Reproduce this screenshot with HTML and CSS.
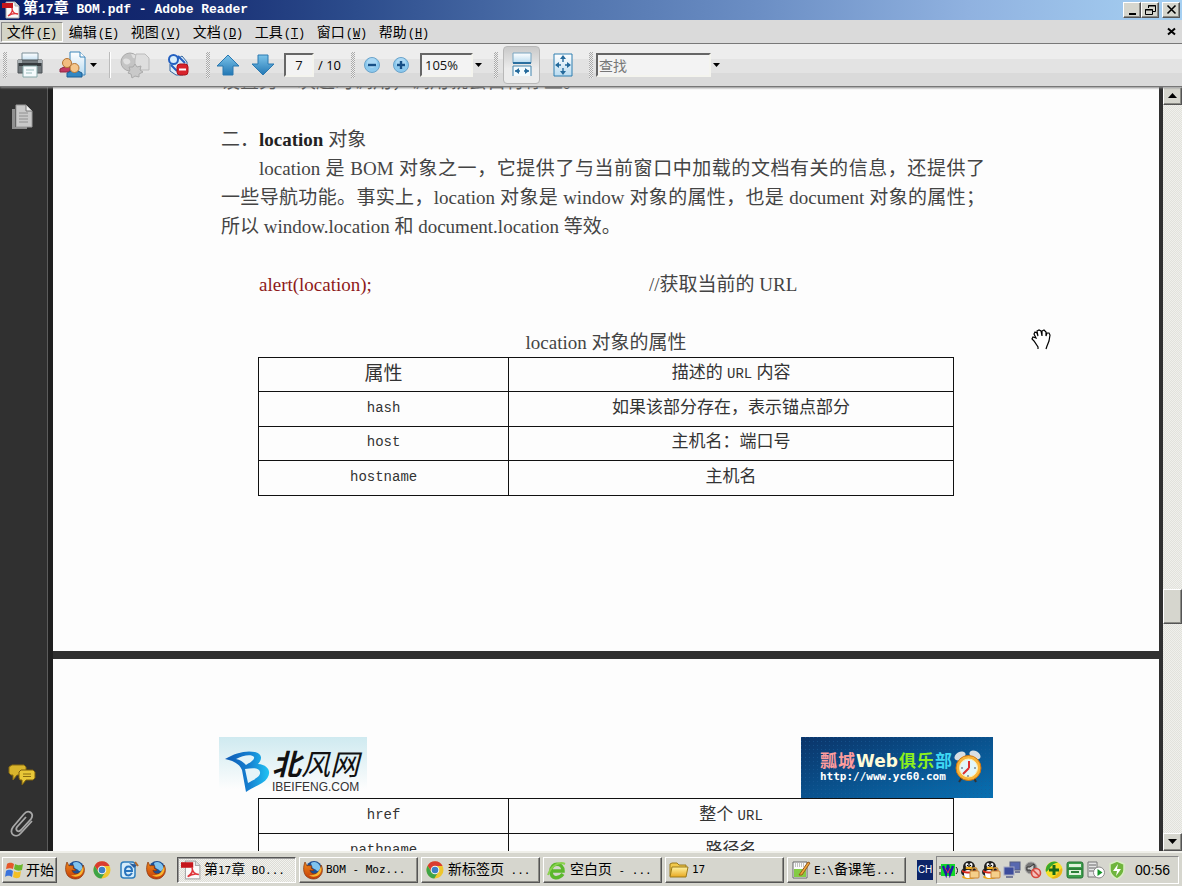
FILE: index.html
```html
<!DOCTYPE html>
<html lang="zh-CN">
<head>
<meta charset="utf-8">
<title>第17章 BOM.pdf - Adobe Reader</title>
<link rel="stylesheet" href="styles.css">
</head>
<body>
<svg class="defs" aria-hidden="true">
  <defs>
    <linearGradient id="blue" x1="0" y1="0" x2="0" y2="1"><stop offset="0" stop-color="#7cc4ea"/><stop offset="1" stop-color="#2277b4"/></linearGradient>
    <linearGradient id="paleblue" x1="0" y1="0" x2="0" y2="1"><stop offset="0" stop-color="#fff"/><stop offset="1" stop-color="#b9dbf0"/></linearGradient>
    <linearGradient id="gold" x1="0" y1="0" x2="0" y2="1"><stop offset="0" stop-color="#fff3a0"/><stop offset="1" stop-color="#e8a820"/></linearGradient>
    <linearGradient id="brandblue" x1="0" y1="0" x2="1" y2="0"><stop offset="0" stop-color="#0f5bb5"/><stop offset="0.55" stop-color="#157fd0"/><stop offset="1" stop-color="#22c4f4"/></linearGradient>
    <linearGradient id="firefox-fur" x1="0" y1="0" x2="0" y2="1"><stop offset="0" stop-color="#f08a1c"/><stop offset="1" stop-color="#c23c08"/></linearGradient>
    <symbol id="pdf" viewBox="0 0 18 18">
      <path d="M4 1h9l4 4v12H4z" fill="#fafafa" stroke="#aaa"/><path d="M13 1v4h4" fill="#ddd" stroke="#aaa"/>
      <path d="M0 2h11v5H0z" fill="#c5161c"/>
      <path d="M6 15c3-2 5-5 4-8 0 4 3 6 6 6-3-1-7 0-10 2z" fill="none" stroke="#e0343a" stroke-width="1.4"/>
    </symbol>
    <symbol id="firefox" viewBox="0 0 20 20">
      <circle cx="11" cy="9" r="8" fill="#1d4f93"/><path d="M8 3c3-2 7-1 9 3 1 3-1 5-3 5-1-2-4-2-5-4z" fill="#7fc3ee"/>
      <path d="M2 2C0 7 0 12 3 16c4 4 11 4 14 0 3-3 3-8 1-11 0 4-1 7-4 8-3 2-7 0-7-3 1 1 3 1 4 0L8 8l1-2C7 6 5 5 4 6z" fill="url(#firefox-fur)" stroke="#82300a" stroke-width=".7"/>
      <path d="M18 6c1 4 0 8-4 10-3 1-6 1-8-1 6 1 10-2 12-9z" fill="#f8b733"/>
    </symbol>
    <symbol id="chrome" viewBox="0 0 20 20">
      <circle cx="10" cy="10" r="8.500" fill="#eec62e"/><path d="M2.600 5.700a8.500 8.500 0 0 1 15 .3H10a4 4 0 0 0-3.700 5.500z" fill="#d93c2f"/>
      <path d="M2.600 5.700a8.500 8.500 0 0 0 6.700 12.800l3.800-6.200a4 4 0 0 1-6.700-.4z" fill="#3fa447"/>
      <circle cx="10" cy="10" r="4.300" fill="#f5f5f5"/><circle cx="10" cy="10" r="3.300" fill="#3c80c6"/>
    </symbol>
    <symbol id="qq" viewBox="0 0 20 20">
      <ellipse cx="9" cy="17" rx="7" ry="2" fill="#e8a318"/><ellipse cx="9" cy="12" rx="8" ry="5" fill="#222"/><ellipse cx="9" cy="7" rx="6" ry="6" fill="#1c1c1c"/>
      <ellipse cx="8" cy="14" rx="4" ry="4" fill="#fff"/><ellipse cx="7" cy="5" rx="1.500" ry="2" fill="#fff"/><ellipse cx="11" cy="5" rx="1.500" ry="2" fill="#fff"/>
      <circle cx="7.500" cy="5.400" r=".7"/><circle cx="10.500" cy="5.400" r=".7"/><ellipse cx="9" cy="8" rx="3.500" ry="1.200" fill="#f2b01c"/>
      <path d="M2 10c4 2 10 2 14 0v2c-4 2-10 2-14 0z" fill="#d8291c"/>
      <path d="M12 11v-1c0-3 5-3 5 0v1" fill="none" stroke="#c98f3e" stroke-width="1.300"/><rect x="10" y="11" width="9" height="7" rx="1" fill="#f5cf8a" stroke="#c8843a"/>
    </symbol>
    <symbol id="caret" viewBox="0 0 7 5"><path d="M0 0h7L3.500 4z"/></symbol>
  </defs>
</svg>

<div class="app">
  <header class="titlebar">
    <svg class="i18"><use href="#pdf"/></svg>
    <h1 class="title"><span class="han">第</span>17<span class="han">章</span> BOM.pdf - Adobe Reader</h1>
    <div class="winbtns">
      <button class="raised winbtn" aria-label="最小化"><svg width="13" height="12"><path d="M3 9h7v2H3z"/></svg></button>
      <button class="raised winbtn" aria-label="还原"><svg width="13" height="12" fill="none" stroke="#000"><path d="M4.500 4V1.500h7v6H9M4 2h8M1.500 5.500h7v5h-7zM1 6h8"/></svg></button>
      <button class="raised winbtn close" aria-label="关闭"><svg width="13" height="12"><path d="M2.500 1.500l8 8m0-8l-8 8" stroke="#000" stroke-width="1.600"/></svg></button>
    </div>
  </header>

  <nav class="menubar">
    <button class="menu open">文件<span class="key">(<u>F</u>)</span></button>
    <button class="menu">编辑<span class="key">(<u>E</u>)</span></button>
    <button class="menu">视图<span class="key">(<u>V</u>)</span></button>
    <button class="menu">文档<span class="key">(<u>D</u>)</span></button>
    <button class="menu">工具<span class="key">(<u>T</u>)</span></button>
    <button class="menu">窗口<span class="key">(<u>W</u>)</span></button>
    <button class="menu">帮助<span class="key">(<u>H</u>)</span></button>
    <button class="docclose" aria-label="关闭文档"><svg width="9" height="9"><path d="M1 1.500l7 6m0-6l-7 6" stroke="#000" stroke-width="2"/></svg></button>
  </nav>

  <div class="toolbar">
    <span class="grip"></span>
    <button class="tool w40" aria-label="打印"><svg width="28" height="28">
      <path d="M6 2h16v9H6z" fill="url(#paleblue)" stroke="#7a8f98"/><path d="M2 9h24v13H2z" fill="#71787c" stroke="#4c5357"/><path d="M3 12h22v3H3z" fill="#363b3e"/><path d="M2 9h4v3H2zM22 9h4v3h-4z" fill="#a9b0b4"/>
      <path d="M7 15h14v11H7z" fill="#f5fafc" stroke="#8aa"/><path d="M10 19h8M10 22h6" stroke="#9bb"/></svg></button>
    <button class="tool share" aria-label="协作"><svg width="28" height="28">
      <path d="M11 1h10l5 5v18H11z" fill="url(#paleblue)" stroke="#3a85ba"/><path d="M21 1v5h5" fill="#fff" stroke="#3a85ba"/>
      <path d="M1 21v-3l4-2h6v5z" fill="#c23a62" stroke="#8e2442"/><circle cx="8" cy="12" r="4.500" fill="#f2bd80" stroke="#b57534"/>
      <path d="M8 26v-4l4-2h7l4 2v4z" fill="#3287c3" stroke="#1c5c92"/><circle cx="15.500" cy="17" r="4.500" fill="#f5c78c" stroke="#b57534"/></svg><svg class="caret"><use href="#caret"/></svg></button>
    <span class="sep"></span>
    <button class="tool w44" aria-label="在线服务" disabled><svg width="32" height="28">
      <circle cx="11" cy="11" r="9" fill="#c4c4c4" stroke="#aaa"/><path d="M4 9c4-4 9 1 7 3s-6 3-7-3zM12 3c4 0 7 3 7 5l-5-1z" fill="#e0e0e0"/><path d="M17 3h9l4 4v12H16V9z" fill="#dedede" stroke="#bbb"/>
      <path d="M16 13l2 3 4-1-1 4 3 2-4 2v3l-4-1-3 2-1-4-3-1 2-3-1-3 4 0z" fill="#c9c9c9" stroke="#aaa"/></svg></button>
    <button class="tool w42" aria-label="审阅状态"><svg width="22" height="24">
      <path d="M3 11v7l6 4h7l4-6V9l-5-6z" fill="#dcecf7" stroke="#33649f"/><circle cx="6.500" cy="6.500" r="4.500" fill="#d8eefc" stroke="#2460c0" stroke-width="2"/><path d="M11 3l7 7M4 12l6 6" stroke="#2460c0" stroke-width="2"/>
      <rect x="10" y="11" width="11" height="11" rx="3" fill="#d8232c" stroke="#a8141c"/><path d="M12 16.500h7" stroke="#fff" stroke-width="2"/></svg></button>
    <span class="grip after"></span>
    <button class="tool w30" aria-label="上一页"><svg width="24" height="24"><path d="M12 2L1 13h6v9h10v-9h6z" fill="url(#blue)" stroke="#2b78b0"/></svg></button>
    <button class="tool w40" aria-label="下一页"><svg width="24" height="24"><path d="M12 22L1 11h6V2h10v9h6z" fill="url(#blue)" stroke="#2b78b0"/></svg></button>
    <input class="field pageno" type="text" value="7" aria-label="页码">
    <span class="total">/ 10</span>
    <span class="grip"></span>
    <button class="tool w28" aria-label="缩小"><svg width="18" height="18"><circle cx="9" cy="9" r="7.500" fill="#8cc9ee" stroke="#6ba3ca"/><circle cx="9" cy="7" r="5" fill="#bfe3f8" opacity=".6"/><path d="M5 9h8" stroke="#164f86" stroke-width="2.400"/></svg></button>
    <button class="tool w30" aria-label="放大"><svg width="18" height="18"><circle cx="9" cy="9" r="7.500" fill="#8cc9ee" stroke="#6ba3ca"/><circle cx="9" cy="7" r="5" fill="#bfe3f8" opacity=".6"/><path d="M5 9h8M9 5v8" stroke="#164f86" stroke-width="2.400"/></svg></button>
    <select class="field zoom" aria-label="缩放"><option>105%</option></select>
    <svg class="caret"><use href="#caret"/></svg>
    <span class="grip far"></span>
    <button class="tool pressed" aria-label="适合宽度"><svg width="20" height="26">
      <path d="M1 1h18v10H1z" fill="url(#paleblue)" stroke="#79a6c2"/><path d="M1 11h18" stroke="#2b6f9f" stroke-width="2"/><path d="M1 24V14h18v10" fill="#f3fafd" stroke="#4384ad"/><path d="M3 19h5m4 0h5" stroke="#246a9c" stroke-width="1.600"/><path d="M7 16l-4 3 4 3zM13 16l4 3-4 3z" fill="#246a9c"/></svg></button>
    <button class="tool fit" aria-label="适合页面"><svg width="20" height="24">
      <path d="M1 1h18v22H1z" fill="url(#paleblue)" stroke="#2f7eb0"/><path d="M10 4v5M10 15v5M3 12h5M12 12h5" stroke="#246a9c" stroke-width="1.400"/><path d="M10 2l3 4H7zM10 22l3-4H7zM2 12l4-3v6zM18 12l-4-3v6z" fill="#246a9c"/></svg></button>
    <span class="grip"></span>
    <input class="field find" type="text" placeholder="查找" aria-label="查找">
    <svg class="caret"><use href="#caret"/></svg>
  </div>

  <main class="work">
    <aside class="rail">
      <button class="railbtn" aria-label="页面"><svg width="24" height="28"><path d="M2 6h3v18h12v2H2z" fill="#8f8f8f"/><path d="M6 2h10l6 6v16H6z" fill="#c9c9c9" stroke="#999"/><path d="M16 2v6h6" fill="#eee" stroke="#777"/><path d="M9 10h9M9 13h9M9 16h9M9 19h9" stroke="#909090"/></svg></button>
      <span class="fill"></span>
      <button class="railbtn" aria-label="注释"><svg width="28" height="22"><path d="M4 1h12l2 2v6l-2 2H9l-4 5v-5H3L1 9V3z" fill="#d9b52c" stroke="#8a6c10"/><path d="M13 6h12l2 2v6l-2 2h-7l-4 5v-5h-2l-1-2V8z" fill="#e8c738" stroke="#7c5f0c"/><path d="M15 10h8M15 12.500h8" stroke="#8a6c10"/></svg></button>
      <button class="railbtn" aria-label="附件"><svg width="26" height="28" fill="none" stroke="#a8a8a8" stroke-width="1.800"><path d="M23 11L12 23c-5 6-13 1-8-6L15 4c4-5 11-1 7 5L12 20c-3 3-6 0-4-3l9-10"/></svg></button>
    </aside>

    <div class="doc">
      <section class="page first">
        <div class="body">
          <p class="line">设置另一次超时调用，调用就会自行停止。</p>
          <h2 class="line heading">二．<b>location</b> 对象</h2>
          <p class="line full indent">location 是 BOM 对象之一，它提供了与当前窗口中加载的文档有关的信息，还提供了</p>
          <p class="line full">一些导航功能。事实上，location 对象是 window 对象的属性，也是 document 对象的属性；</p>
          <p class="line">所以 window.location 和 document.location 等效。</p>
          <div class="line code"><code>alert(location);</code><span>//获取当前的 URL</span></div>
          <table class="props">
            <caption>location 对象的属性</caption>
            <thead><tr><th class="name">属性</th><th>描述的 <span class="mono">URL</span> 内容</th></tr></thead>
            <tbody>
              <tr><td class="name">hash</td><td>如果该部分存在，表示锚点部分</td></tr>
              <tr><td class="name">host</td><td>主机名：端口号</td></tr>
              <tr><td class="name">hostname</td><td>主机名</td></tr>
            </tbody>
          </table>
        </div>
      </section>

      <section class="page second">
        <div class="letterhead">
          <svg width="148" height="61" role="img" aria-label="北风网">
            <defs><linearGradient id="sky" x1="0" y1="0" x2="0" y2="1"><stop offset="0" stop-color="#cfeaf0"/><stop offset="1" stop-color="#fdfdfd"/></linearGradient></defs>
            <path d="M0 0h148v52H0z" fill="url(#sky)"/>
            <path d="M6 22c10-6 21-9 30-7 8 2 7 8 3 12 13 1 15 12 4 19-5 3-10 5-16 9l-4-22c-2-5-7-9-17-11z" fill="url(#brandblue)"/>
            <path d="M17 22c7-4 16-5 18-2 1 3-5 6-8 8-2-2-5-5-10-6zM26 32c7-1 14-2 15 3 1 5-7 8-12 11z" fill="#e5f4f8"/>
            <text class="brush" y="38"><tspan class="heavy" x="53">北</tspan><tspan x="82">风网</tspan></text>
            <text class="domain" x="53" y="54">IBEIFENG.COM</text>
          </svg>
          <svg width="192" height="61" role="img" aria-label="瓢城Web俱乐部">
            <defs><linearGradient id="sea" x1="0" y1="0" x2="1" y2="1"><stop offset="0" stop-color="#0b3469"/><stop offset="1" stop-color="#0870b2"/></linearGradient>
            <pattern id="dots" width="4" height="4" patternUnits="userSpaceOnUse"><path d="M0 0h1v1H0z" fill="#1b5c98" opacity=".6"/></pattern></defs>
            <path d="M0 0h192v61H0z" fill="url(#sea)"/><path d="M0 0h192v61H0z" fill="url(#dots)"/>
            <text class="club" y="30"><tspan x="19" fill="#ff9c9c">瓢</tspan><tspan x="37" fill="#ff9c9c">城</tspan><tspan x="98" fill="#8cf01c">俱</tspan><tspan x="116" fill="#8cf01c">乐</tspan><tspan x="134" fill="#3fd8f4">部</tspan></text>
            <text class="web" x="55" y="30">Web</text>
            <text class="url" x="19" y="43">http://www.yc60.com</text>
            <ellipse cx="159" cy="19" rx="6" ry="4" fill="#d8dfe4" transform="rotate(-30 159 19)"/><ellipse cx="174" cy="18" rx="6" ry="4" fill="#d8dfe4" transform="rotate(30 174 18)"/>
            <path d="M158 45l4-6M175 45l-3-6" stroke="#333" stroke-width="2"/>
            <circle cx="167.500" cy="31" r="12.500" fill="#f7b53a" stroke="#cf7410"/><circle cx="167.500" cy="31" r="9" fill="#e2f7fa" stroke="#fff0b8"/>
            <path d="M168 31v-7M168 31l-6 6" stroke="#dc3030" stroke-width="2"/><path d="M173 31h2M167 38v2M160 31h2" stroke="#456"/>
          </svg>
        </div>
        <div class="body">
          <table class="props more">
            <tbody>
              <tr><td class="name">href</td><td>整个 <span class="mono">URL</span></td></tr>
              <tr><td class="name">pathname</td><td>路径名</td></tr>
            </tbody>
          </table>
        </div>
      </section>
      <svg class="hand" width="20" height="21" aria-hidden="true"><path d="M7 20v-2l-4-6-2-2 1-2 3 1-2-4 1-2 2 1 1 3-1-5 2-1 2 1 1 5V2l2-1 2 2v4l1-3 2 0 1 2-1 6-2 5-1 3" fill="#fff" stroke="#000" stroke-width="1.200"/></svg>
    </div>

    <div class="scroll">
      <button class="raised arrow" aria-label="向上"><svg width="9" height="6"><path d="M0 5h9L4.500 0z"/></svg></button>
      <span class="track above"></span>
      <span class="raised thumb"></span>
      <span class="track below"></span>
      <button class="raised arrow" aria-label="向下"><svg width="9" height="6"><path d="M0 0h9L4.500 5z"/></svg></button>
    </div>
  </main>

  <footer class="taskbar">
    <button class="raised start"><svg width="19" height="18"><path d="M2 3c3-2 5-1 7 0L8 8C6 7 4 7 1 8z" fill="#e6572a"/><path d="M10 3c2 1 4 2 8 0l-1 6c-3 1-5 1-8-1z" fill="#6bb52c"/><path d="M1 10c3-2 5-1 7 0l-1 6c-2-1-4-2-7 0z" fill="#3b74dc"/><path d="M9 10c2 1 4 2 7 0l-1 6c-3 2-5 1-7 0z" fill="#f3bf24"/></svg>开始</button>
    <div class="quick">
      <button aria-label="Firefox"><svg class="i20"><use href="#firefox"/></svg></button>
      <button aria-label="Chrome"><svg class="i20"><use href="#chrome"/></svg></button>
      <button aria-label="浏览器"><svg width="20" height="20"><rect x="2" y="2" width="14" height="16" rx="3" fill="#d5ecfa" stroke="#2e7dbd" stroke-width="1.500"/><path d="M6 11h7c0-6-7-6-7 0s5 5 7 2" fill="none" stroke="#2773bd" stroke-width="2"/><path d="M10 3l8 2-3 3z" fill="#295b9a"/><path d="M16 2l3 4" stroke="#b46a2c" stroke-width="2"/></svg></button>
      <button aria-label="Firefox"><svg class="i20"><use href="#firefox"/></svg></button>
    </div>
    <div class="tasks">
      <button class="raised task current"><svg class="i20"><use href="#pdf"/></svg><span><span class="cjk">第</span>17<span class="cjk">章</span> BO...</span></button>
      <button class="raised task"><svg class="i20"><use href="#firefox"/></svg><span>BOM - Moz...</span></button>
      <button class="raised task"><svg class="i20"><use href="#chrome"/></svg><span><span class="cjk">新标签页</span> ...</span></button>
      <button class="raised task"><svg width="20" height="20"><path d="M5 11h11c0-9-12-9-12 0s8 8 12 3" fill="none" stroke="#5cb82c" stroke-width="3.500"/><path d="M1 15C4 6 12 1 18 4" fill="none" stroke="#8ad24e" stroke-width="2"/></svg><span><span class="cjk">空白页</span> - ...</span></button>
      <button class="raised task"><svg width="20" height="20"><path d="M1 16V4l2-1h5l2 2h7v3" fill="#f1c94c" stroke="#9c7a1a"/><path d="M1 17l2-10h16l-2 10z" fill="url(#gold)" stroke="#9c7a1a"/></svg><span>17</span></button>
      <button class="raised task"><svg width="20" height="20"><path d="M2 2h14v16H2z" fill="#fafafa" stroke="#666"/><path d="M3 9h12v8H3z" fill="#84cc44"/><path d="M4 4h9M4 6h9" stroke="#888" stroke-dasharray="1 1"/><path d="M8 15L17 2l2 1-8 12z" fill="#f2a83c" stroke="#94581a"/></svg><span>E:\<span class="cjk">备课笔</span>...</span></button>
    </div>
    <span class="fill"></span>
    <button class="lang">CH</button>
    <div class="tray">
      <svg width="20" height="20"><path d="M2 4h14v12H2z" fill="#12d82a"/><path d="M1 6v3M1 12v3M17 7c2 2 2 5 0 7" stroke="#111" fill="none"/><path d="M4 6l3 8 2-9 2 9 3-8" fill="none" stroke="#1e1aa8" stroke-width="2.400"/><path d="M6 8l3 5 2-5" fill="none" stroke="#d22a5a"/></svg>
      <svg class="i20"><use href="#qq"/></svg>
      <svg class="i20"><use href="#qq"/></svg>
      <svg width="20" height="20"><rect x="8" y="2" width="10" height="8" fill="#5868b0" stroke="#555c80"/><rect x="2" y="7" width="10" height="8" fill="#3c4c9c" stroke="#a4a8c4"/><path d="M4 17h7M13 12h5" stroke="#777c98" stroke-width="2"/></svg>
      <svg width="20" height="20"><circle cx="8" cy="8" r="6" fill="#777" stroke="#aaa"/><path d="M4 7h3l4-3v9L7 10H4z" fill="#ccc" stroke="#333"/><circle cx="13" cy="13" r="4.500" fill="#f3c0bc" stroke="#d5483e" stroke-width="1.600"/><path d="M10 10l6 6" stroke="#d5483e" stroke-width="1.600"/></svg>
      <svg width="20" height="20"><circle cx="10" cy="10" r="8.500" fill="#f4e025"/><path d="M2 12A8.500 8.500 0 0 1 14 2.500C6 4 6 10 2 12z" fill="#38a82c"/><path d="M18 8A8.500 8.500 0 0 1 7 18c7-2 7-8 11-10z" fill="#eab418"/><path d="M5 10h10M10 5v10" stroke="#17681a" stroke-width="3"/></svg>
      <svg width="20" height="20"><rect x="2" y="2" width="16" height="16" rx="2" fill="#3d9e4c" stroke="#267034"/><path d="M4 4h12v3H4zM4 10h12v5H4z" fill="#dff2dc"/><path d="M3 9h14M6 12h8" stroke="#2c8039" stroke-width="2"/></svg>
      <svg width="20" height="20"><path d="M2 2h9v15H2z" fill="#e5e5e5" stroke="#777"/><path d="M3 5h7M3 8h7M3 11h7" stroke="#666"/><circle cx="13" cy="12.500" r="5.500" fill="#fff" stroke="#888"/><path d="M11.500 9l5 3.500-5 3.500z" fill="#16952a"/></svg>
      <svg width="20" height="20"><path d="M10 1l7 3v6c0 5-4 7-7 9-3-2-7-4-7-9V4z" fill="#6fb53c" stroke="#d9edc4" stroke-width="1.500"/><path d="M11 4l-5 7h4l-1 5 5-7h-4z" fill="#fff"/></svg>
      <time class="clock">00:56</time>
    </div>
  </footer>
</div>
</body>
</html>
```

FILE: styles.css
```css
* { box-sizing: border-box; }

body {
  margin: 0;
  overflow: hidden;
  font-family: "Liberation Sans", "Noto Sans CJK SC", sans-serif;
  color: #000;
}

button {
  margin: 0;
  padding: 0;
  border: 0;
  background: none;
  font: inherit;
  color: inherit;
}

svg { display: block; flex: none; }

.defs { position: absolute; width: 0; height: 0; }
.i18 { width: 18px; height: 18px; }
.i20 { width: 20px; height: 20px; }
.caret { width: 7px; height: 5px; }
.fill { flex: 1; }

.app { display: flex; flex-direction: column; height: 100vh; }

.raised {
  background: #d6d6ce;
  border: 1px solid;
  border-color: #fff #555 #555 #fff;
  box-shadow: inset -1px -1px #8c8c86;
}

/* Title bar */
.titlebar {
  display: flex;
  align-items: center;
  gap: 3px;
  height: 20px;
  flex: none;
  padding: 0 2px;
  background: linear-gradient(90deg, #0a1d66, #14296f 14%, #2c4c8c 30%, #4d70aa 46%, #6b8ec4 64%, #90b2e0 82%, #a6d0f2);
}
.title {
  flex: 1;
  margin: 0;
  font: bold 13px/20px "Liberation Mono", "Noto Sans CJK SC", monospace;
  color: #fff;
  white-space: pre;
}
.han { font-size: 15px; }
.winbtns { display: flex; }
.winbtn { width: 18px; height: 16px; display: grid; place-items: center; }
.winbtn.close { margin-left: 3px; }

/* Menus */
.menubar {
  display: flex;
  align-items: center;
  height: 24px;
  flex: none;
  padding-left: 1px;
  background: #dadada;
  border-bottom: 1px solid #777;
}
.menu { width: 62px; height: 20px; font-size: 14px; line-height: 18px; border: 1px solid transparent; }
.menu.open { background: #d4d4c6; border-color: #888 #fff #fff #888; }
.key { margin-left: 1px; font: 12px/18px "Liberation Mono", monospace; }
.docclose { margin-left: auto; padding: 6px; }

/* Toolbar */
.toolbar {
  position: relative;
  z-index: 1;
  display: flex;
  align-items: center;
  height: 43px;
  flex: none;
  background: linear-gradient(#ededed 36%, #e3e3e3 36%, #e3e3e3 69%, #dadada 69%);
  border-bottom: 1px solid #777;
  box-shadow: 0 1px 2px #8a8a8a;
}
.grip {
  width: 4px;
  height: 26px;
  margin: 0 3px;
  background: repeating-conic-gradient(#aaa 0 25%, #eee 0 50%) 0 0 / 2px 2px;
}
.grip.after { margin-left: 7px; }
.grip.far { margin-left: 12px; }
.sep { width: 2px; height: 26px; margin: 0 2px 0 7px; background: #bbb; border-right: 1px solid #fff; }
.tool { display: flex; align-items: center; justify-content: center; height: 38px; }
.w28 { width: 28px; }
.w30 { width: 30px; }
.w40 { width: 40px; }
.w42 { width: 42px; }
.w44 { width: 44px; }
.share { width: 52px; gap: 3px; padding-left: 4px; }
.pressed {
  width: 37px;
  margin: 0 5px 0 2px;
  border: 1px solid #b8b8b8;
  border-radius: 4px;
  background: linear-gradient(#c9c9c9, #ececec 60%);
}
.fit { width: 36px; margin-right: 5px; }
.field {
  height: 24px;
  padding: 0 3px;
  border: 2px solid;
  border-color: #666 #f4f4ee #f4f4ee #666;
  border-radius: 0;
  background: #f3f3f3;
  color: #111;
  font: 13px/20px "Open Sans", "Noto Sans CJK SC", sans-serif;
  outline: 0;
}
.pageno { width: 30px; margin: 0 1px; text-align: center; }
.total { width: 33px; padding-left: 3px; font: 13px/20px "Open Sans", sans-serif; }
.zoom { width: 53px; margin: 0 2px 0 4px; appearance: none; }
.find { width: 115px; margin-right: 2px; padding: 0 1px; font-size: 14px; }
.find::placeholder { color: #777; opacity: 1; }

/* Work area */
.work { display: flex; flex: 1; min-height: 0; background: #303030; }
.rail {
  display: flex;
  flex-direction: column;
  align-items: center;
  gap: 24px;
  width: 53px;
  padding: 16px 4px 13px 0;
  border-right: 5px solid #1f1f1f;
  box-shadow: inset -1px 0 #5c5c5c;
}
.doc { position: relative; flex: 1; min-width: 0; overflow: hidden; }
.page { background: #fdfdfd; overflow: hidden; }
.first { padding-bottom: 155px; }
.second { margin-top: 8px; min-height: 100%; padding-top: 78px; }
.hand { position: absolute; top: 242px; right: 108px; }

.body {
  padding: 0 174px 0 168px;
  font: 19px/29px "Liberation Serif", "Noto Sans CJK SC", serif;
  color: #444;
}
.first .body { margin-top: -20px; }
.line { margin: 0; white-space: nowrap; font-size: 19px; line-height: 29px; }
.heading { margin-top: 29px; font-weight: normal; }
.heading b { color: #222; }
.full { text-align: justify; text-align-last: justify; white-space: normal; }
.indent { text-indent: 38px; }
.code { display: grid; grid-template-columns: 390px 1fr; margin: 29px 0; padding-left: 38px; }
.code code { font: inherit; color: #8e1a1a; }

.props {
  width: calc(100% - 68px);
  height: 139px;
  margin-left: 37px;
  border-collapse: collapse;
  table-layout: fixed;
  color: #333;
}
.props.more { height: 71px; }
.props tr { height: 34px; }
.props caption { color: #444; }
.props th, .props td {
  padding: 0 0 2px;
  border: 1px solid #111;
  font-size: 17px;
  line-height: 24px;
  font-weight: normal;
  text-align: center;
}
.props .name { width: 36%; }
.props td.name, .props .mono { font-family: "Liberation Mono", monospace; font-size: 14px; }
.props th.name { font-size: 19px; }

.letterhead { display: flex; justify-content: space-between; padding: 0 166px; }
.brush { font: italic 29px "Noto Sans CJK SC", sans-serif; fill: #111; }
.heavy { font-weight: bold; }
.domain { font: 12px "Liberation Sans", sans-serif; fill: #333; }
.club { font: bold 17px "Noto Sans CJK SC", sans-serif; }
.web { font: bold 17px "DejaVu Sans", sans-serif; fill: #fffbd8; }
.url { font: bold 11px "DejaVu Sans Mono", monospace; fill: #fff; }

/* Scroll bar */
.scroll { display: flex; flex-direction: column; width: 19px; margin-left: 4px; }
.arrow { height: 18px; display: grid; place-items: center; }
.track { background: repeating-conic-gradient(#e2e2dc 0 25%, #f0f0ec 0 50%) 0 0 / 2px 2px; }
.above { flex: 484; }
.below { flex: 209; }
.thumb { height: 35px; }

/* Task bar */
.taskbar {
  display: flex;
  align-items: center;
  height: 35px;
  flex: none;
  padding: 2px 3px 1px 2px;
  background: #d6d6ce;
  border-top: 2px solid #efefe9;
}
.start { display: flex; align-items: center; justify-content: center; gap: 2px; width: 55px; height: 26px; font-size: 14px; line-height: 20px; }
.quick { display: flex; gap: 7px; margin: 0 11px 0 8px; }
.tasks { display: flex; gap: 3px; }
.task {
  display: flex;
  align-items: center;
  gap: 3px;
  width: 119px;
  height: 26px;
  padding-left: 3px;
  font: 11px/20px "DejaVu Sans Mono", "Noto Sans CJK SC", monospace;
  white-space: pre;
}
.task.current {
  border-color: #555 #fff #fff #555;
  box-shadow: inset 1px 1px #999;
  background: repeating-conic-gradient(#dcdcd6 0 25%, #f2f2ee 0 50%) 0 0 / 2px 2px;
}
.cjk { font-size: 14px; }
.lang { width: 16px; height: 20px; margin-right: 3px; background: #0c2468; color: #fff; font: 10px/20px "Liberation Sans", sans-serif; }
.tray {
  display: flex;
  align-items: center;
  gap: 1px;
  height: 28px;
  padding: 0 8px 0 2px;
  border: 1px solid;
  border-color: #888 #fff #fff #888;
}
.clock { margin-left: 7px; font: 14px/20px "Liberation Sans", sans-serif; }
```
